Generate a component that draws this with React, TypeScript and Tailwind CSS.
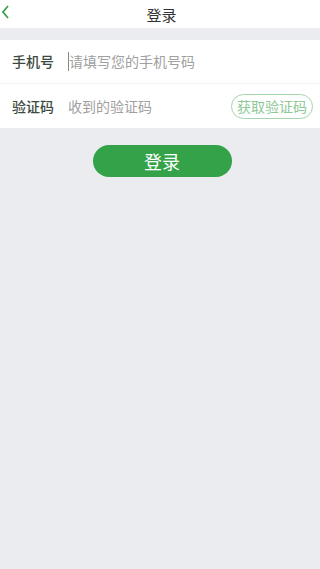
export default function App() {
  return (
    <div
      className="min-h-[569px] w-[320px] bg-[#ebecf0]"
      style={{ fontFamily: '"Noto Sans CJK SC", "Liberation Sans", sans-serif' }}
    >
      {/* 헤더 */}
      <div className="relative flex h-[28px] items-center justify-center bg-white pl-[3px]">
        <svg className="absolute left-[1px] top-[5px]" width="9" height="14" viewBox="0 0 9 14">
          <path d="M7 1L2 7l5 6" fill="none" stroke="#3aa14e" strokeWidth="1.8" />
        </svg>
        <span className="text-[15px] leading-none text-[#333]">登录</span>
      </div>

      {/* 입력 */}
      <div className="mt-[12px] bg-white">
        <div className="flex h-[44px] items-center border-b border-[#f2f2f2] pl-[12px]">
          <span className="w-[56px] text-[14px] font-medium text-[#3d4a3f]">手机号</span>
          <span className="h-[19px] w-px bg-[#888]" />
          <span className="text-[14px] text-[#a0a0a0]">请填写您的手机号码</span>
        </div>
        <div className="flex h-[44px] items-center pl-[12px] pr-[7px]">
          <span className="w-[56px] text-[14px] font-medium text-[#3d4a3f]">验证码</span>
          <span className="flex-1 text-[14px] text-[#a0a0a0]">收到的验证码</span>
          <span className="flex h-[25px] items-center rounded-full border border-[#a4d5ad] px-[5px] text-[14px] text-[#8ec897]">
            获取验证码
          </span>
        </div>
      </div>

      <div className="mt-[17px] flex justify-center pl-[4px]">
        <button className="flex h-[32px] w-[139px] items-center justify-center rounded-full bg-[#34a248] text-[18px] text-white">
          登录
        </button>
      </div>
    </div>
  );
}
